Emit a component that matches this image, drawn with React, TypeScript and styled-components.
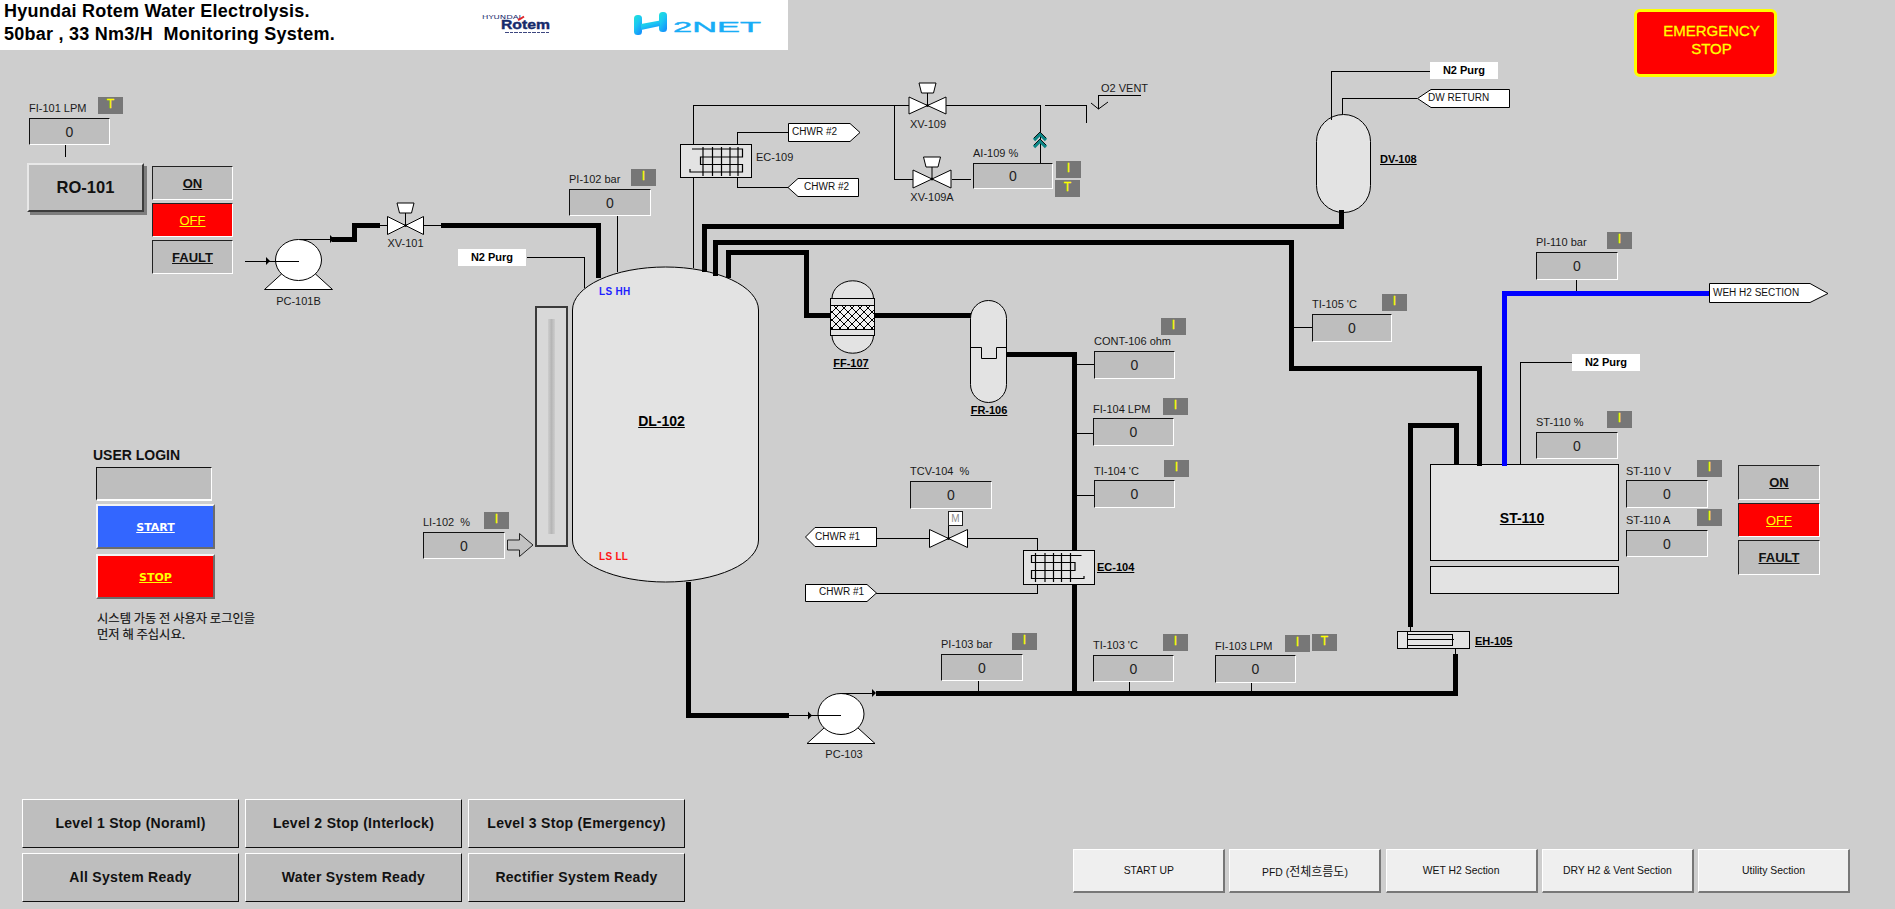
import React from 'react';
import styled, { createGlobalStyle, css } from 'styled-components';

const SANS = '"Liberation Sans", Arial, sans-serif';
const CANVAS_TOP = 50;

const Global = createGlobalStyle`
  html, body { margin: 0; padding: 0; background: #cecece; }
  body { font-family: ${SANS}; color: #111; overflow: hidden; }
  #root { width: 1895px; height: 909px; }
`;

const Page = styled.div`
  width: 1895px;
  height: 909px;
  background: #cecece;
  display: flex;
  flex-direction: column;
  overflow: hidden;
`;

const TopRow = styled.header`
  height: 50px;
  flex: none;
  display: flex;
  justify-content: space-between;
  align-items: flex-start;
  padding-right: 118px;
  position: relative;
  z-index: 2;
`;

const Banner = styled.div`
  width: 788px;
  height: 50px;
  background: #fff;
  display: flex;
  align-items: flex-start;
`;

const Title = styled.h1`
  width: 478px;
  margin: 0;
  padding: 0 0 0 4px;
  font-size: 18px;
  letter-spacing: 0.25px;
  line-height: 23px;
  font-weight: 700;
  color: #000;
  white-space: pre;
  box-sizing: border-box;
`;

const LogoSvg = styled.svg<{ $top: number; $left?: number }>`
  display: block;
  flex: none;
  margin-top: ${(p) => p.$top}px;
  margin-left: ${(p) => p.$left ?? 0}px;
`;

const Emergency = styled.button`
  width: 143px;
  height: 68px;
  margin-top: 9px;
  padding: 0 0 6px 12px;
  box-sizing: border-box;
  background: #ff0000;
  border: 3px solid #ffff00;
  border-radius: 6px;
  color: #ffff00;
  font: 400 15px/18px ${SANS};
  -webkit-text-stroke: 0.3px #ffff00;
`;

const Canvas = styled.main`
  flex: 1;
  position: relative;
`;

const PipeLayer = styled.svg`
  position: absolute;
  left: 0;
  top: 0;
  display: block;
`;

type At = { $x: number; $y: number };
type Sized = At & { $w: number; $h: number };

const placed = css<At>`
  position: absolute;
  left: ${(p) => p.$x}px;
  top: ${(p) => p.$y - CANVAS_TOP}px;
`;

const TagLabel = styled.span<At>`
  ${placed};
  margin-top: -8px;
  font-size: 11px;
  line-height: 16px;
  color: #1a1a1a;
  white-space: pre;
`;

const CentredLabel = styled(TagLabel)`
  transform: translateX(-50%);
`;

const FlagText = styled(TagLabel)`
  font-size: 10px;
  color: #111;
`;

const EquipLabel = styled(TagLabel)<{ $big?: boolean; $mid?: boolean }>`
  font-weight: 700;
  font-size: ${(p) => (p.$big ? 14 : 11)}px;
  text-decoration: underline;
  color: #000;
  ${(p) => p.$mid && 'transform: translateX(-50%);'}
`;

const LevelSwitch = styled(TagLabel)<{ $c: string }>`
  font-size: 10px;
  font-weight: 700;
  letter-spacing: 0.3px;
  color: ${(p) => p.$c};
`;

const ValueBox = styled.div<Sized>`
  ${placed};
  width: ${(p) => p.$w}px;
  height: ${(p) => p.$h}px;
  box-sizing: border-box;
  background: #bebebe;
  border-style: solid;
  border-width: 1px;
  border-color: #111 #fff #fff #111;
  display: flex;
  align-items: center;
  justify-content: center;
  font-size: 14px;
  color: #222;
`;

const Badge = styled.div<Sized>`
  ${placed};
  width: ${(p) => p.$w}px;
  height: ${(p) => p.$h}px;
  background: #777;
  color: #ffff00;
  font-size: 12px;
  -webkit-text-stroke: 0.3px #ffff00;
  line-height: 14px;
  text-align: center;
`;

const PurgeTag = styled.div<At>`
  ${placed};
  width: 68px;
  height: 17px;
  background: #fff;
  color: #000;
  font-size: 11px;
  font-weight: 700;
  line-height: 16px;
  text-align: center;
`;

const RaisedMachine = styled.button<At>`
  ${placed};
  width: 117px;
  height: 49px;
  box-sizing: border-box;
  padding: 0;
  background: #bebebe;
  border-style: solid;
  border-width: 2px;
  border-color: #e8e8e8 #3c3c3c #3c3c3c #e8e8e8;
  box-shadow: 3px 3px 0 #7d7d7d;
  font: 700 16.5px ${SANS};
  color: #111;
`;

const StatusStack = styled.div<Sized>`
  ${placed};
  width: ${(p) => p.$w}px;
  height: ${(p) => p.$h}px;
  display: flex;
  flex-direction: column;
  gap: 3px;
`;

const StatusCell = styled.button<{ $alarm?: boolean }>`
  flex: 1;
  box-sizing: border-box;
  padding: 0;
  background: ${(p) => (p.$alarm ? '#ff0000' : '#bebebe')};
  border-style: solid;
  border-width: 1px;
  border-color: #222 #fff #fff #222;
  font: ${(p) => (p.$alarm ? 400 : 700)} 13px ${SANS};
  color: ${(p) => (p.$alarm ? '#ffff00' : '#111')};
  text-decoration: underline;
`;

const LoginPanel = styled.section<At>`
  ${placed};
  display: flex;
  flex-direction: column;
  align-items: flex-start;
`;

const LoginTitle = styled.h2`
  margin: 0 0 4px -3px;
  font-size: 14px;
  line-height: 16px;
  font-weight: 700;
  color: #111;
`;

const LoginField = styled.div`
  width: 116px;
  height: 34px;
  box-sizing: border-box;
  background: #bebebe;
  border-style: solid;
  border-width: 1px 1px 2px 1px;
  border-color: #111 #fff #fff #111;
  margin-bottom: 3px;
`;

const LoginButton = styled.button<{ $bg: string; $fg: string }>`
  width: 119px;
  height: 45px;
  margin-bottom: 5px;
  box-sizing: border-box;
  padding: 1px 0 0;
  background: ${(p) => p.$bg};
  border-style: solid;
  border-width: 2px;
  border-color: #f4f4f4 #6c6c6c #6c6c6c #f4f4f4;
  color: ${(p) => p.$fg};
  font: 700 11px "DejaVu Sans", sans-serif;
  text-decoration: underline;
`;

const LoginNote = styled.p`
  margin: 6px 0 0 1px;
  font: 400 12.3px/16px "Noto Sans CJK KR", ${SANS}, sans-serif;
  -webkit-text-stroke: 0.15px #111;
  color: #111;
  white-space: pre;
`;

const Footer = styled.footer`
  height: 110px;
  flex: none;
  display: flex;
  align-items: flex-start;
  justify-content: space-between;
  padding: 0 45px 0 22px;
`;

const StopGrid = styled.div`
  display: grid;
  grid-template-columns: repeat(3, 217px);
  grid-auto-rows: 49px;
  column-gap: 6px;
  row-gap: 5px;
`;

const StopButton = styled.button`
  box-sizing: border-box;
  padding: 0 0 2px;
  background: #bebebe;
  border-style: solid;
  border-width: 1px;
  border-color: #fff #111 #111 #fff;
  font: 700 14px ${SANS};
  letter-spacing: 0.3px;
  color: #111;
`;

const NavBar = styled.nav`
  display: grid;
  grid-template-columns: repeat(5, 152px);
  column-gap: 4.2px;
  margin-top: 50px;
`;

const NavButton = styled.button`
  height: 44px;
  box-sizing: border-box;
  padding: 0;
  background: #efefef;
  border-style: solid;
  border-width: 1px 2px 2px 1px;
  border-color: #fff #777 #777 #fff;
  font: 400 10.4px "Liberation Sans", sans-serif;
  color: #111;
`;

const Hangul = styled.span`
  font: 400 12px "Noto Sans CJK KR", sans-serif;
`;

/* ---------- drawings ---------- */

const Thick = ({ p, c = '#000' }: { p: string; c?: string }) => (
  <polyline points={p} fill="none" stroke={c} strokeWidth={5} strokeLinejoin="miter" shapeRendering="crispEdges" />
);
const Thin = ({ p }: { p: string }) => (
  <polyline points={p} fill="none" stroke="#000" strokeWidth={1} shapeRendering="crispEdges" />
);
const FlowTip = ({ x, y }: { x: number; y: number }) => (
  <polygon points={`${x - 2},${y - 4} ${x + 2},${y} ${x - 2},${y + 4}`} fill="#000" />
);

const Valve = ({ cx, cy, hw, hh, act }: { cx: number; cy: number; hw: number; hh: number; act?: number }) => (
  <g stroke="#000" strokeWidth={1}>
    {act !== undefined && (
      <>
        <line x1={cx} y1={cy} x2={cx} y2={act + 10} />
        <polygon
          points={`${cx - 8.5},${act} ${cx + 8.5},${act} ${cx + 6},${act + 10} ${cx - 6},${act + 10}`}
          fill="#fff"
        />
      </>
    )}
    <polygon points={`${cx - hw},${cy - hh} ${cx},${cy} ${cx - hw},${cy + hh}`} fill="#fff" />
    <polygon points={`${cx + hw},${cy - hh} ${cx},${cy} ${cx + hw},${cy + hh}`} fill="#fff" />
    <circle cx={cx} cy={cy} r={1} fill="#000" />
  </g>
);

const Pump = ({ cx, cy, inY, inX0, tipX, outY, outX }: { cx: number; cy: number; inY: number; inX0: number; tipX: number; outY: number; outX: number }) => (
  <g>
    <polygon
      points={`${cx - 34},${cy + 29.5} ${cx - 17},${cy + 14} ${cx + 17},${cy + 14} ${cx + 34},${cy + 29.5}`}
      fill="#fff"
      stroke="#000"
    />
    <ellipse cx={cx} cy={cy} rx={23} ry={20.5} fill="#fff" stroke="#000" />
    <Thin p={`${inX0},${inY} ${cx},${inY}`} />
    <FlowTip x={tipX} y={inY} />
    <Thin p={`${cx + 1},${outY} ${outX},${outY}`} />
    <FlowTip x={outX} y={outY} />
  </g>
);

const Coil = ({ rows, xs, y0, y1 }: { rows: string; xs: number[]; y0: number; y1: number }) => (
  <g fill="none" stroke="#000" strokeWidth={1.2}>
    <polyline points={rows} />
    {xs.map((x) => (
      <line key={x} x1={x} y1={y0} x2={x} y2={y1} />
    ))}
  </g>
);

const vesselFill = '#e3e3e3';

const Chevrons = () => (
  <g fill="none">
    <polyline points="1034,140 1040,134 1046,140" stroke="#0b8484" strokeWidth={3.2} />
    <polyline points="1034,147 1040,141 1046,147" stroke="#0b8484" strokeWidth={3.2} />
    <polyline points="1034,138 1040,132 1046,138" stroke="#111" strokeWidth={1} />
    <polyline points="1034,145 1040,139 1046,145" stroke="#111" strokeWidth={1} />
  </g>
);

const Diagram = () => (
  <PipeLayer width={1895} height={749} viewBox={`0 ${CANVAS_TOP} 1895 749`}>
    <defs>
      <pattern id="hatch" width="8" height="8" patternUnits="userSpaceOnUse">
        <rect width="8" height="8" fill="#f2f2f2" />
        <path d="M0 0L8 8M8 0L0 8" stroke="#000" strokeWidth="1" />
      </pattern>
      <linearGradient id="tube" x1="0" x2="1" y1="0" y2="0">
        <stop offset="0" stopColor="#cdcdcd" />
        <stop offset="0.5" stopColor="#b6b6b6" />
        <stop offset="1" stopColor="#cdcdcd" />
      </linearGradient>
    </defs>

    {/* DL-102 drum */}
    <path
      d="M572.5,310 A93 43 0 0 1 758.5,310 L758.5,540 A93 42 0 0 1 572.5,540 Z"
      fill={vesselFill}
      stroke="#000"
    />
    {/* level gauge */}
    <rect x={536} y={307} width={31} height={239} fill="#d8d8d8" stroke="#3a3a3a" strokeWidth={2} />
    <rect x={548} y={319} width={7} height={215} fill="url(#tube)" />
    <polygon
      points="507.5,540 519.5,540 519.5,533.5 533,545 519.5,556.5 519.5,550 507.5,550"
      fill="#c2c2c2"
      stroke="#222"
    />

    {/* DV-108 */}
    <rect x={1316.5} y={114.5} width={54} height={98} rx={27} ry={27} fill={vesselFill} stroke="#000" />
    {/* ST-110 */}
    <rect x={1430.5} y={464.5} width={188} height={96} fill={vesselFill} stroke="#000" />
    <rect x={1430.5} y={566.5} width={188} height={27} fill={vesselFill} stroke="#000" />

    {/* main process lines */}
    <Thick p="332,239 354,239 354,225.5 380,225.5" />
    <Thick p="441,225.5 598.5,225.5 598.5,278" />
    <Thick p="704.5,272 704.5,226.5 1341.5,226.5 1341.5,210" />
    <Thick p="715.5,276 715.5,242.5 1291.5,242.5 1291.5,368.5 1479.5,368.5 1479.5,466" />
    <Thick p="728,278 728,252.5 806.5,252.5 806.5,315 831,315" />
    <Thick p="875,315 971,315" />
    <Thick p="1007,354.5 1074.5,354.5 1074.5,693" />
    <Thick p="688.5,582 688.5,715 788.6,715" />
    <Thick p="875.6,693 1455.5,693 1455.5,654" />
    <Thick p="1410.5,627 1410.5,425.5 1456,425.5 1456,464" />
    <Thick c="#0000ff" p="1709.6,293.5 1504,293.5 1504,466" />

    {/* instrument and utility lines */}
    <Thin p="65.5,145 65.5,157" />
    <Thin p="380,225.5 388,225.5" />
    <Thin p="424,225.5 441,225.5" />
    <Thin p="617.5,216 617.5,272" />
    <Thin p="527,257.5 584.5,257.5 584.5,288" />
    <Thin p="693.5,268 693.5,105.5 909,105.5" />
    <Thin p="946,105.5 1040.5,105.5 1040.5,163" />
    <Thin p="894.5,105.5 894.5,179.5 913,179.5" />
    <Thin p="952,179.5 971,179.5" />
    <Thin p="1045,105.5 1086.5,105.5 1086.5,123" />
    <Thin p="1141,95.5 1098.5,95.5 1098.5,109" />
    <polyline points="1091,103 1098.5,109 1108,102" fill="none" stroke="#000" />
    <Thin p="737.5,144 737.5,132.5 788,132.5" />
    <Thin p="737.5,178 737.5,187.5 788,187.5" />
    <Thin p="1430,71.5 1331.5,71.5 1331.5,120" />
    <Thin p="1417,98.5 1342.5,98.5 1342.5,114" />
    <Thin p="1576.5,280 1576.5,291" />
    <Thin p="1572,362.5 1520.5,362.5 1520.5,464" />
    <Thin p="1077,364.5 1094,364.5" />
    <Thin p="1077,433.5 1093,433.5" />
    <Thin p="1077,495.5 1094,495.5" />
    <Thin p="1294,327.5 1312,327.5" />
    <Thin p="876,538.5 929,538.5" />
    <Thin p="967.5,538.5 1037.5,538.5 1037.5,550" />
    <Thin p="1037.5,585 1037.5,593.5 876,593.5" />
    <Thin p="978.5,681 978.5,691" />
    <Thin p="1129.5,682 1129.5,691" />
    <Thin p="1251.5,683 1251.5,691" />
    <Thin p="1410.5,627 1410.5,631" />
    <Thin p="1455.5,648 1455.5,654" />

    <Chevrons />

    {/* pointed line tags */}
    <g fill="#fff" stroke="#000" strokeWidth={1}>
      <polygon points="788.5,123.5 850,123.5 860,132.5 850,141.5 788.5,141.5" />
      <polygon points="798,178.5 858.5,178.5 858.5,196.5 798,196.5 788,187.5" />
      <polygon points="1431,89.5 1509.5,89.5 1509.5,107.5 1431,107.5 1417.5,98.5" />
      <polygon points="1709.5,283.5 1810,283.5 1828,293.5 1810,302.5 1709.5,302.5" />
      <polygon points="815,527.5 876.5,527.5 876.5,546.5 815,546.5 805.5,537" />
      <polygon points="805.5,584.5 867,584.5 876.5,593 867,601.5 805.5,601.5" />
    </g>

    {/* valves */}
    <Valve cx={405.5} cy={225.5} hw={18} hh={9} act={203} />
    <Valve cx={927.5} cy={105.5} hw={18.5} hh={8.5} act={83} />
    <Valve cx={932} cy={179} hw={19} hh={9} act={157} />
    <Valve cx={948.5} cy={538.5} hw={19} hh={9} />
    <line x1={948.5} y1={538} x2={948.5} y2={526} stroke="#000" />

    {/* pumps */}
    <Pump cx={298.5} cy={260} inY={261} inX0={245} tipX={268} outY={239} outX={332} />
    <Pump cx={841} cy={714} inY={715.5} inX0={788} tipX={810} outY={693} outX={874} />

    {/* EC-109 */}
    <rect x={680.5} y={144.5} width={71} height={33} fill={vesselFill} stroke="#000" />
    <Coil
      rows="692,149 742.5,149 742.5,157 700.5,157 700.5,164.5 742.5,164.5 742.5,172 690,172 690,169"
      xs={[703, 712.5, 721.5, 730, 738]}
      y0={147}
      y1={176}
    />
    {/* EC-104 */}
    <rect x={1023.5} y={550.5} width={71} height={34} fill={vesselFill} stroke="#000" />
    <Coil
      rows="1081.5,555.5 1031.5,555.5 1031.5,562.5 1075,562.5 1075,570.5 1031.5,570.5 1031.5,578.5 1084,578.5 1084,576"
      xs={[1035.5, 1045, 1053.5, 1061.5, 1070.5]}
      y0={553}
      y1={582}
    />

    {/* FF-107 */}
    <path d="M832,298.5 A20.5 17.5 0 0 1 873.5,298.5 Z" fill={vesselFill} stroke="#000" />
    <path d="M832,335.5 A20.5 17.5 0 0 0 873.5,335.5 Z" fill={vesselFill} stroke="#000" />
    <rect x={830.5} y={298.5} width={44} height={7} fill={vesselFill} stroke="#000" />
    <rect x={830.5} y={305.5} width={44} height={24} fill="url(#hatch)" stroke="#000" />
    <rect x={830.5} y={329.5} width={44} height={6} fill={vesselFill} stroke="#000" />

    {/* FR-106 */}
    <rect x={970.5} y={300.5} width={36} height={102} rx={18} ry={18} fill={vesselFill} stroke="#000" />
    <polyline points="970.5,347.5 981.5,347.5 981.5,358.5 996.5,358.5 996.5,347.5 1006.5,347.5" fill="none" stroke="#000" />

    {/* EH-105 */}
    <rect x={1397.5} y={631.5} width={72} height={17} fill={vesselFill} stroke="#000" />
    <line x1={1407.5} y1={631} x2={1407.5} y2={648} stroke="#000" shapeRendering="crispEdges" />
    <rect x={1407.5} y={634.5} width={45} height={11} fill="none" stroke="#000" shapeRendering="crispEdges" />
    <line x1={1407.5} y1={639.5} x2={1454} y2={639.5} stroke="#000" shapeRendering="crispEdges" />
  </PipeLayer>
);

const RotemLogo = () => (
  <LogoSvg $top={13} width={76} height={24} viewBox="0 0 76 24">
    <text x={4} y={6} fontFamily="DejaVu Sans" fontSize={5.5} fill="#26306f" textLength={39} lengthAdjust="spacingAndGlyphs">
      HYUNDAI
    </text>
    <path d="M40 7l3-1.5 3-2" stroke="#e0262a" strokeWidth={2} fill="none" />
    <text x={23} y={16} fontFamily="Liberation Sans" fontWeight={700} fontSize={13} fill="#162a6b" stroke="#162a6b" strokeWidth={0.4} textLength={49} lengthAdjust="spacingAndGlyphs">
      Rotem
    </text>
    <line x1={27} y1={19.5} x2={72} y2={19.5} stroke="#3d4780" strokeWidth={1.2} strokeDasharray="4 1 3 1" />
  </LogoSvg>
);

const H2NetLogo = () => (
  <LogoSvg $top={11} $left={78} width={132} height={26} viewBox="0 0 132 26">
    <defs>
      <linearGradient id="h2" x1="0" x2="0.6" y1="0" y2="1">
        <stop offset="0" stopColor="#1fe3d8" />
        <stop offset="0.5" stopColor="#1cc8f2" />
        <stop offset="1" stopColor="#1796fb" />
      </linearGradient>
    </defs>
    <rect x={2} y={4} width={8} height={20} rx={3.5} fill="url(#h2)" />
    <rect x={27} y={1} width={8} height={20} rx={3.5} fill="url(#h2)" />
    <path d="M9 13 L28 9.5 L28 15 L9 19 Z" fill="url(#h2)" />
    <text x={41} y={21} fontFamily="Liberation Sans" fontSize={15.5} fill="#18adf6" stroke="#18adf6" strokeWidth={0.4} textLength={88} lengthAdjust="spacingAndGlyphs">
      2NET
    </text>
  </LogoSvg>
);

/* ---------- data ---------- */

type Inst = { label: string; lx: number; ly: number; x: number; y: number; w: number; h: number };
const instruments: Inst[] = [
  { label: 'FI-101 LPM', lx: 29, ly: 108, x: 29, y: 118, w: 81, h: 27 },
  { label: 'PI-102 bar', lx: 569, ly: 179, x: 569, y: 189, w: 82, h: 27 },
  { label: 'AI-109 %', lx: 973, ly: 153, x: 973, y: 163, w: 80, h: 26 },
  { label: 'LI-102  %', lx: 423, ly: 522, x: 423, y: 532, w: 82, h: 27 },
  { label: 'CONT-106 ohm', lx: 1094, ly: 341, x: 1094, y: 351, w: 81, h: 28 },
  { label: 'FI-104 LPM', lx: 1093, ly: 409, x: 1093, y: 418, w: 81, h: 28 },
  { label: "TI-104 'C", lx: 1094, ly: 471, x: 1094, y: 480, w: 81, h: 28 },
  { label: 'TCV-104  %', lx: 910, ly: 471, x: 910, y: 481, w: 82, h: 28 },
  { label: "TI-105 'C", lx: 1312, ly: 304, x: 1312, y: 314, w: 80, h: 28 },
  { label: 'PI-110 bar', lx: 1536, ly: 242, x: 1536, y: 252, w: 82, h: 28 },
  { label: 'ST-110 %', lx: 1536, ly: 422, x: 1536, y: 432, w: 82, h: 27 },
  { label: 'ST-110 V', lx: 1626, ly: 471, x: 1626, y: 480, w: 82, h: 28 },
  { label: 'ST-110 A', lx: 1626, ly: 520, x: 1626, y: 530, w: 82, h: 27 },
  { label: 'PI-103 bar', lx: 941, ly: 644, x: 941, y: 654, w: 82, h: 27 },
  { label: "TI-103 'C", lx: 1093, ly: 645, x: 1093, y: 655, w: 81, h: 27 },
  { label: 'FI-103 LPM', lx: 1215, ly: 646, x: 1215, y: 655, w: 81, h: 28 },
];

const badges: { t: string; x: number; y: number }[] = [
  { t: 'T', x: 98, y: 97 },
  { t: 'I', x: 631, y: 169 },
  { t: 'I', x: 1056, y: 161 },
  { t: 'T', x: 1055, y: 180 },
  { t: 'I', x: 484, y: 512 },
  { t: 'I', x: 1161, y: 318 },
  { t: 'I', x: 1163, y: 398 },
  { t: 'I', x: 1164, y: 460 },
  { t: 'I', x: 1382, y: 294 },
  { t: 'I', x: 1607, y: 232 },
  { t: 'I', x: 1607, y: 411 },
  { t: 'I', x: 1697, y: 460 },
  { t: 'I', x: 1697, y: 509 },
  { t: 'I', x: 1012, y: 633 },
  { t: 'I', x: 1163, y: 634 },
  { t: 'I', x: 1285, y: 635 },
  { t: 'T', x: 1312, y: 634 },
];

const flags: [string, number, number][] = [
  ['CHWR #2', 792, 132],
  ['CHWR #2', 804, 187],
  ['DW RETURN', 1428, 98],
  ['WEH H2 SECTION', 1713, 293],
  ['CHWR #1', 815, 537],
  ['CHWR #1', 819, 592],
];

const centred: [string, number, number][] = [
  ['PC-101B', 298.5, 301],
  ['XV-101', 405.5, 243],
  ['XV-109', 928, 124],
  ['XV-109A', 932, 197],
  ['PC-103', 844, 754],
];

const plain: [string, number, number][] = [
  ['EC-109', 756, 157],
  ['O2 VENT', 1101, 88],
];

const equipment: { t: string; x: number; y: number; big?: boolean; mid?: boolean }[] = [
  { t: 'DL-102', x: 661.5, y: 421, big: true, mid: true },
  { t: 'ST-110', x: 1522, y: 518, big: true, mid: true },
  { t: 'DV-108', x: 1380, y: 159 },
  { t: 'FF-107', x: 851, y: 363, mid: true },
  { t: 'FR-106', x: 989, y: 410, mid: true },
  { t: 'EC-104', x: 1097, y: 567 },
  { t: 'EH-105', x: 1475, y: 641 },
];

const purges: [number, number][] = [
  [458, 249],
  [1430, 62],
  [1572, 354],
];

const stops = [
  'Level 1 Stop (Noraml)',
  'Level 2 Stop (Interlock)',
  'Level 3 Stop (Emergency)',
  'All System Ready',
  'Water System Ready',
  'Rectifier System Ready',
];

const Status = ({ x, y, w, h }: { x: number; y: number; w: number; h: number }) => (
  <StatusStack $x={x} $y={y} $w={w} $h={h}>
    <StatusCell>ON</StatusCell>
    <StatusCell $alarm>OFF</StatusCell>
    <StatusCell>FAULT</StatusCell>
  </StatusStack>
);

const MotorTag = styled.div<At>`
  ${placed};
  width: 15px;
  height: 15px;
  box-sizing: border-box;
  background: #fff;
  border: 1px solid #222;
  color: #8d8d8d;
  font-size: 10px;
  line-height: 13px;
  text-align: center;
`;

export default function App() {
  return (
    <Page>
      <Global />
      <TopRow>
        <Banner>
          <Title>{'Hyundai Rotem Water Electrolysis.\n50bar , 33 Nm3/H  Monitoring System.'}</Title>
          <RotemLogo />
          <H2NetLogo />
        </Banner>
        <Emergency>
          EMERGENCY
          <br />
          STOP
        </Emergency>
      </TopRow>

      <Canvas>
        <Diagram />

        {instruments.map((i) => (
          <React.Fragment key={i.label}>
            <TagLabel $x={i.lx} $y={i.ly}>{i.label}</TagLabel>
            <ValueBox $x={i.x} $y={i.y} $w={i.w} $h={i.h}>0</ValueBox>
          </React.Fragment>
        ))}
        {badges.map((b) => (
          <Badge key={`${b.x}-${b.y}`} $x={b.x} $y={b.y} $w={25} $h={17}>{b.t}</Badge>
        ))}
        {flags.map(([t, x, y]) => (
          <FlagText key={`${x}-${y}`} $x={x} $y={y}>{t}</FlagText>
        ))}
        {centred.map(([t, x, y]) => (
          <CentredLabel key={t} $x={x} $y={y}>{t}</CentredLabel>
        ))}
        {plain.map(([t, x, y]) => (
          <TagLabel key={t} $x={x} $y={y}>{t}</TagLabel>
        ))}
        {equipment.map((e) => (
          <EquipLabel key={e.t} $x={e.x} $y={e.y} $big={e.big} $mid={e.mid}>{e.t}</EquipLabel>
        ))}
        {purges.map(([x, y]) => (
          <PurgeTag key={x} $x={x} $y={y}>N2 Purg</PurgeTag>
        ))}

        <LevelSwitch $x={599} $y={292} $c="#1f1fff">LS HH</LevelSwitch>
        <LevelSwitch $x={599} $y={557} $c="#ff1414">LS LL</LevelSwitch>
        <MotorTag $x={948} $y={511}>M</MotorTag>

        <RaisedMachine $x={27} $y={163}>RO-101</RaisedMachine>
        <Status x={152} y={166} w={81} h={108} />
        <Status x={1738} y={465} w={82} h={110} />

        <LoginPanel $x={96} $y={447}>
          <LoginTitle>USER LOGIN</LoginTitle>
          <LoginField />
          <LoginButton $bg="#3366ff" $fg="#fff">START</LoginButton>
          <LoginButton $bg="#ff0000" $fg="#ffff00">STOP</LoginButton>
          <LoginNote>{'시스템 가동 전 사용자 로그인을\n먼저 해 주십시요.'}</LoginNote>
        </LoginPanel>
      </Canvas>

      <Footer>
        <StopGrid>
          {stops.map((s) => (
            <StopButton key={s}>{s}</StopButton>
          ))}
        </StopGrid>
        <NavBar>
          <NavButton>START UP</NavButton>
          <NavButton>PFD (<Hangul>전체흐름도</Hangul>)</NavButton>
          <NavButton>WET H2 Section</NavButton>
          <NavButton>DRY H2 &amp; Vent Section</NavButton>
          <NavButton>Utility Section</NavButton>
        </NavBar>
      </Footer>
    </Page>
  );
}
